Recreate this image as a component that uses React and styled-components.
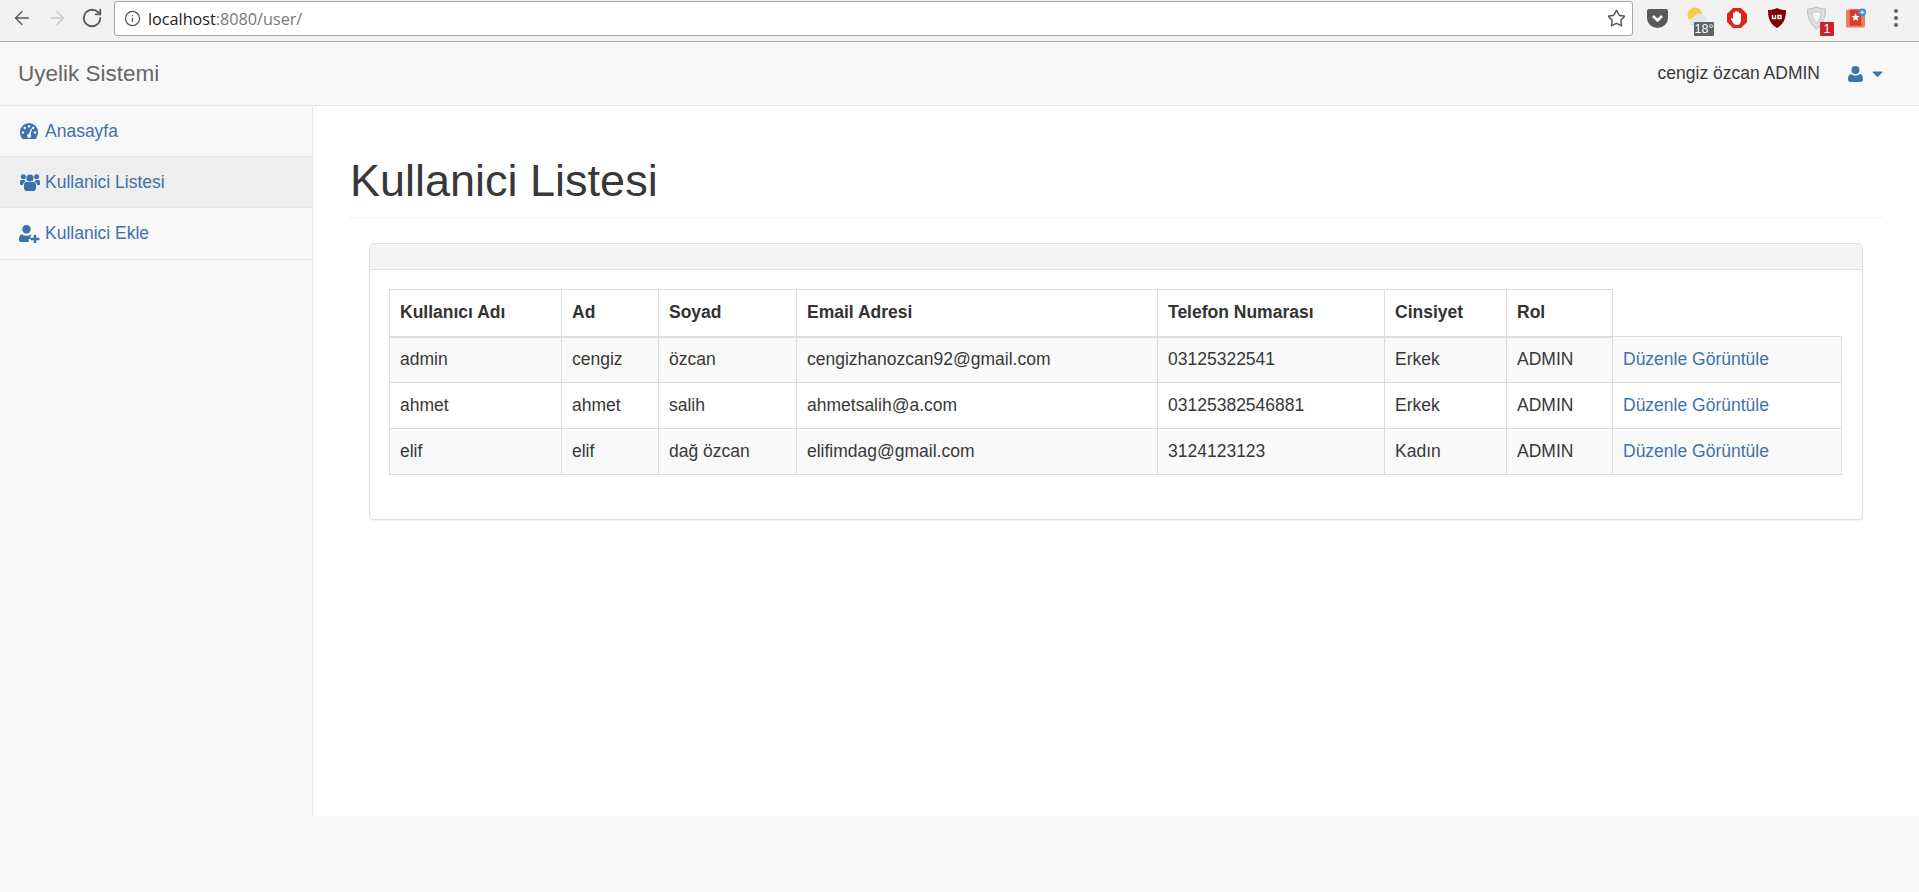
import React from 'react'
import styled, { createGlobalStyle } from 'styled-components'
import { FaCaretDown } from 'react-icons/fa'
import { ArrowLeft, ArrowRight, RotateCw, Info, Star } from 'lucide-react'

const GlobalStyle = createGlobalStyle`
html, body {
  margin: 0;
  padding: 0;
  background: #f8f8f8;
  font-family: "Liberation Sans", Arial, sans-serif;
  font-size: 17.5px;
  color: #383838;
}
* { box-sizing: border-box; }
`

const Page = styled.div`
width: 1919px;
height: 892px;
overflow: hidden;
display: flex;
flex-direction: column;
background: #f8f8f8;
`

const Toolbar = styled.div`
height: 42px;
flex: none;
display: flex;
align-items: flex-start;
background: #f2f2f2;
border-bottom: 1px solid #a9a9a9;
padding-left: 11px;
`
const NavButton = styled.span`
width: 22px;
height: 36px;
display: flex;
align-items: center;
justify-content: center;
margin-right: ${props => props.$gap}px;
color: ${props => props.$off ? '#c8c8c8' : '#5a5a5a'};
`
const Address = styled.div`
width: 1519px;
height: 35px;
margin: 1px 0 0 2px;
display: flex;
align-items: center;
background: #fff;
border: 1px solid #a9a9a9;
border-radius: 3px;
padding: 0 6px 0 9px;
font-family: "Open Sans", "Noto Sans", sans-serif;
font-size: 16.2px;
color: #777;
`
const InfoMark = styled.span`
display: flex;
color: #555;
margin-right: 7px;
`
const Host = styled.span`
color: #222;
`
const StarMark = styled.span`
display: flex;
margin-left: auto;
color: #555;
`
const Extensions = styled.div`
display: flex;
height: 36px;
align-items: center;
margin-left: 14px;
`
const Ext = styled.span`
position: relative;
width: ${props => props.$w}px;
height: 36px;
display: flex;
align-items: center;
margin-left: ${props => props.$gap || 0}px;
`
const ExtBadge = styled.span`
position: absolute;
left: ${props => props.$left}px;
top: 22px;
height: 14px;
width: ${props => props.$w}px;
background: ${props => props.$bg};
border-radius: 1px;
color: #fff;
font-size: 12.5px;
line-height: 14px;
text-align: center;
`
const MenuDots = styled.span`
display: flex;
flex-direction: column;
gap: 3px;
margin-left: 27px;
`
const Dot = styled.i`
width: 4px;
height: 4px;
border-radius: 50%;
background: #5f6368;
`

const Navbar = styled.header`
height: 64px;
flex: none;
display: flex;
align-items: center;
justify-content: space-between;
background: #f8f8f8;
border-bottom: 1px solid #e7e7e7;
padding: 0 33px 0 18px;
`
const Brand = styled.a`
font-size: 22.5px;
color: #666;
`
const NavRight = styled.div`
display: flex;
align-items: center;
`
const UserName = styled.span`
color: #383838;
margin-right: 28px;
`
const UserMenu = styled.span`
display: flex;
align-items: center;
gap: 6px;
color: #3a76ae;
`

const Main = styled.div`
height: 710px;
flex: none;
display: flex;
`
const Sidebar = styled.nav`
width: 313px;
flex: none;
background: #f8f8f8;
border-right: 1px solid #e7e7e7;
`
const SideItem = styled.a`
height: ${props => props.$h}px;
display: flex;
align-items: center;
color: #3f72a8;
padding-left: ${props => props.$left || 20}px;
background: ${props => props.$active ? '#eee' : 'transparent'};
border-bottom: 1px solid #e7e7e7;
`
const SideIcon = styled.span`
width: ${props => props.$w || 25}px;
display: flex;
color: #3a72ab;
`
const Content = styled.main`
flex: 1;
background: #fff;
padding: 0 37px 0 37px;
`
const PageHeader = styled.div`
margin-top: 50px;
height: 62px;
border-bottom: 1px solid #eee;
`
const Title = styled.h1`
margin: 0;
font-size: 45px;
font-weight: 500;
line-height: 50px;
color: #383838;
`
const Panel = styled.section`
margin: 25px 19px 0 19px;
height: 277px;
background: #fff;
border: 1px solid #ddd;
border-radius: 5px;
box-shadow: 0 1px 1px rgba(0, 0, 0, 0.05);
`
const PanelHeading = styled.div`
height: 26px;
background: #f5f5f5;
border-bottom: 1px solid #ddd;
border-radius: 4px 4px 0 0;
`
const PanelBody = styled.div`
padding: 19px 19px 0 19px;
`
const Table = styled.table`
width: 1452px;
table-layout: fixed;
border-collapse: collapse;
`
const Col = styled.col`
width: ${props => props.$w}px;
`
const Th = styled.th`
height: 47px;
padding: 0 10px;
text-align: left;
font-weight: 700;
color: #333;
border: 1px solid #ddd;
border-bottom: 2px solid #ddd;
`
const Row = styled.tr`
background: ${props => props.$odd ? '#f9f9f9' : '#fff'};
`
const Td = styled.td`
height: 46px;
padding: 0 10px;
border: 1px solid #ddd;
color: #383838;
white-space: nowrap;
`
const ActionLink = styled.a`
color: #3f72a8;
`

const GaugeIcon = () => (
  <svg width="18" height="16" viewBox="0 0 18 16">
    <path d="M9 0a9 9 0 0 1 9 9c0 2.600-.8 4.700-2 6.500-.2.300-.5.500-.9.500H2.900c-.4 0-.7-.2-.9-.5C.8 13.700 0 11.600 0 9a9 9 0 0 1 9-9z" fill="currentColor" />
    <g fill="#f8f8f8">
      <circle cx="3" cy="9.500" r="1.200" />
      <circle cx="4.800" cy="5" r="1.200" />
      <circle cx="9" cy="3.200" r="1.200" />
      <circle cx="13.200" cy="5" r="1.200" />
      <circle cx="15" cy="9.500" r="1.200" />
      <path d="M11.200 5.500l1 .4-1.700 5.600a2 2 0 1 1-1.800-.5z" />
    </g>
  </svg>
)

const UsersIcon = () => (
  <svg width="20" height="18" viewBox="0 0 20 18">
    <g fill="currentColor">
      <circle cx="10" cy="5" r="3.600" />
      <circle cx="3.400" cy="3.800" r="2.500" />
      <circle cx="16.600" cy="3.800" r="2.500" />
      <path d="M6.400 9h7.200c1.400 0 2.400 1 2.400 2.600V15c0 2-1.200 3-2.800 3H6.800C5.200 18 4 17 4 15v-3.400C4 10 5 9 6.400 9z" />
      <path d="M1.500 7h2.800c.4.800 1 1.300 1.400 1.500-1.500.5-2.600 1.600-2.800 3.500H1.200C.4 12 0 11.400 0 10.400V8.600C0 7.600.6 7 1.500 7z" />
      <path d="M18.500 7h-2.800c-.4.800-1 1.300-1.400 1.500 1.500.5 2.600 1.600 2.800 3.500h1.700c.8 0 1.200-.6 1.200-1.600V8.600c0-1-.6-1.600-1.500-1.600z" />
    </g>
  </svg>
)

const UserPlusIcon = () => (
  <svg width="21" height="18" viewBox="0 0 21 18">
    <g fill="currentColor">
      <circle cx="7.500" cy="4.200" r="4.200" />
      <path d="M3 9.200c1.200 1 2.800 1.600 4.500 1.600s3-.5 4-1.300c.7.200 1.300.6 1.800 1.100H11.500v3.400H9.800v3H2.500C1 17 0 16.200 0 14.700 0 12 .8 10 3 9.200z" />
      <path d="M14.800 9.800h2.400v3h3.300v2.400h-3.300V18h-2.400v-2.800h-3.300v-2.400h3.300z" />
    </g>
  </svg>
)

const UserIcon = () => (
  <svg width="15" height="16" viewBox="0 0 15 16">
    <g fill="currentColor">
      <circle cx="7.500" cy="4" r="4" />
      <path d="M3.200 8c1.100 1 2.600 1.500 4.300 1.500S10.700 9 11.800 8c2.200.4 3.200 2.400 3.200 5 0 1.800-1 3-2.600 3H2.600C1 16 0 14.800 0 13c0-2.600 1-4.600 3.200-5z" />
    </g>
  </svg>
)

const columns = ['Kullanıcı Adı', 'Ad', 'Soyad', 'Email Adresi', 'Telefon Numarası', 'Cinsiyet', 'Rol']
const widths = [172, 97, 138, 361, 227, 122, 106, 229]
const users = [
  ['admin', 'cengiz', 'özcan', 'cengizhanozcan92@gmail.com', '03125322541', 'Erkek', 'ADMIN'],
  ['ahmet', 'ahmet', 'salih', 'ahmetsalih@a.com', '03125382546881', 'Erkek', 'ADMIN'],
  ['elif', 'elif', 'dağ özcan', 'elifimdag@gmail.com', '3124123123', 'Kadın', 'ADMIN'],
]

const BrowserBar = () => (
  <Toolbar>
    <NavButton $gap={13}><ArrowLeft size={26} strokeWidth={1.5} /></NavButton>
    <NavButton $gap={13} $off><ArrowRight size={26} strokeWidth={1.5} /></NavButton>
    <NavButton $gap={9}><RotateCw size={22} strokeWidth={2} /></NavButton>
    <Address>
      <InfoMark><Info size={17} strokeWidth={1.8} /></InfoMark>
      <span><Host>localhost</Host>:8080/user/</span>
      <StarMark><Star size={19} strokeWidth={1.8} /></StarMark>
    </Address>
    <Extensions>
      <Ext $w={21}>
        <svg width="21" height="19" viewBox="0 0 21 19">
          <path d="M2 0h17a2 2 0 0 1 2 2v7a10.500 10 0 0 1-21 0V2a2 2 0 0 1 2-2z" fill="#58595b" />
          <path d="M6 7l4.500 4.500L15 7" fill="none" stroke="#fff" strokeWidth="2.600" />
        </svg>
      </Ext>
      <Ext $w={28} $gap={18}>
        <svg width="24" height="24" viewBox="0 0 24 24">
          <circle cx="9" cy="9" r="7.500" fill="#f7cb4d" />
          <path d="M6 20a5 5 0 0 1 2-9 7 7 0 0 1 13 3v1a4 4 0 0 1-1 5z" fill="#e6e6e6" />
        </svg>
        <ExtBadge $left={8} $w={20} $bg="#5f6368">18°</ExtBadge>
      </Ext>
      <Ext $w={20} $gap={13}>
        <svg width="20" height="20" viewBox="0 0 20 20">
          <path d="M6 0h8l6 6v8l-6 6H6l-6-6V6z" fill="#e0231c" />
          <path d="M6 9V5.500a1 1 0 0 1 2 0V4a1 1 0 0 1 2 0v.500a1 1 0 0 1 2 0V6a1 1 0 0 1 2 0v6c0 3-1.500 5-4 5s-3.500-1-4.500-3L4 11c-.5-1 1-1.500 2 0z" fill="#fff" />
        </svg>
      </Ext>
      <Ext $w={18} $gap={21}>
        <svg width="18" height="20" viewBox="0 0 18 20">
          <path d="M9 0c3 1.500 6 2 9 2 0 8-2 14-9 18C2 16 0 10 0 2c3 0 6-.5 9-2z" fill="#800000" />
          <path d="M4.500 7v3.500h3V7M10 7.500h3v3h-3z" fill="none" stroke="#fff" strokeWidth="1.400" />
        </svg>
      </Ext>
      <Ext $w={27} $gap={21}>
        <svg width="19" height="24" viewBox="0 0 19 24">
          <path d="M9.500 1c3 1.500 6 2 9 2 0 8-2 15-9 20C3 18 .5 11 .5 3c3 0 6-.5 9-2z" fill="#dcdcdc" stroke="#bdbdbd" />
          <path d="M5 6h9c0 5-2 9-4.500 11C7 15 5 11 5 6z" fill="#f6f6f6" stroke="#c8c8c8" />
        </svg>
        <ExtBadge $left={13} $w={14} $bg="#c8232c">1</ExtBadge>
      </Ext>
      <Ext $w={21} $gap={12}>
        <svg width="22" height="22" viewBox="0 0 22 22">
          <rect x="0" y="2" width="20" height="19" rx="2" fill="#e8805a" />
          <rect x="4" y="2" width="12" height="17" fill="#dd3b2c" />
          <path d="M10 6l1.300 3h3l-2.400 2 .9 3.200L10 12.400l-2.800 1.800.9-3.200L5.700 9h3z" fill="#fff" />
          <circle cx="17" cy="5" r="4" fill="#3d8fe0" />
          <path d="M15 5h4M17 3v4" stroke="#fff" />
        </svg>
      </Ext>
      <MenuDots><Dot /><Dot /><Dot /></MenuDots>
    </Extensions>
  </Toolbar>
)

const App = () => (
  <Page>
    <GlobalStyle />
    <BrowserBar />
    <Navbar>
      <Brand>Uyelik Sistemi</Brand>
      <NavRight>
        <UserName>cengiz özcan ADMIN</UserName>
        <UserMenu><UserIcon /><FaCaretDown size={17} /></UserMenu>
      </NavRight>
    </Navbar>
    <Main>
      <Sidebar>
        <SideItem $h={51}><SideIcon><GaugeIcon /></SideIcon>Anasayfa</SideItem>
        <SideItem $h={51} $active><SideIcon><UsersIcon /></SideIcon>Kullanici Listesi</SideItem>
        <SideItem $h={52} $left={19}><SideIcon $w={26}><UserPlusIcon /></SideIcon>Kullanici Ekle</SideItem>
      </Sidebar>
      <Content>
        <PageHeader><Title>Kullanici Listesi</Title></PageHeader>
        <Panel>
          <PanelHeading />
          <PanelBody>
            <Table>
              <colgroup>
                {widths.map((w, i) => <Col key={i} $w={w} />)}
              </colgroup>
              <thead>
                <tr>
                  {columns.map(c => <Th key={c}>{c}</Th>)}
                </tr>
              </thead>
              <tbody>
                {users.map((u, i) => (
                  <Row key={u[0]} $odd={i % 2 === 0}>
                    {u.map((v, j) => <Td key={j}>{v}</Td>)}
                    <Td><ActionLink>Düzenle</ActionLink> <ActionLink>Görüntüle</ActionLink></Td>
                  </Row>
                ))}
              </tbody>
            </Table>
          </PanelBody>
        </Panel>
      </Content>
    </Main>
  </Page>
)

export default App
